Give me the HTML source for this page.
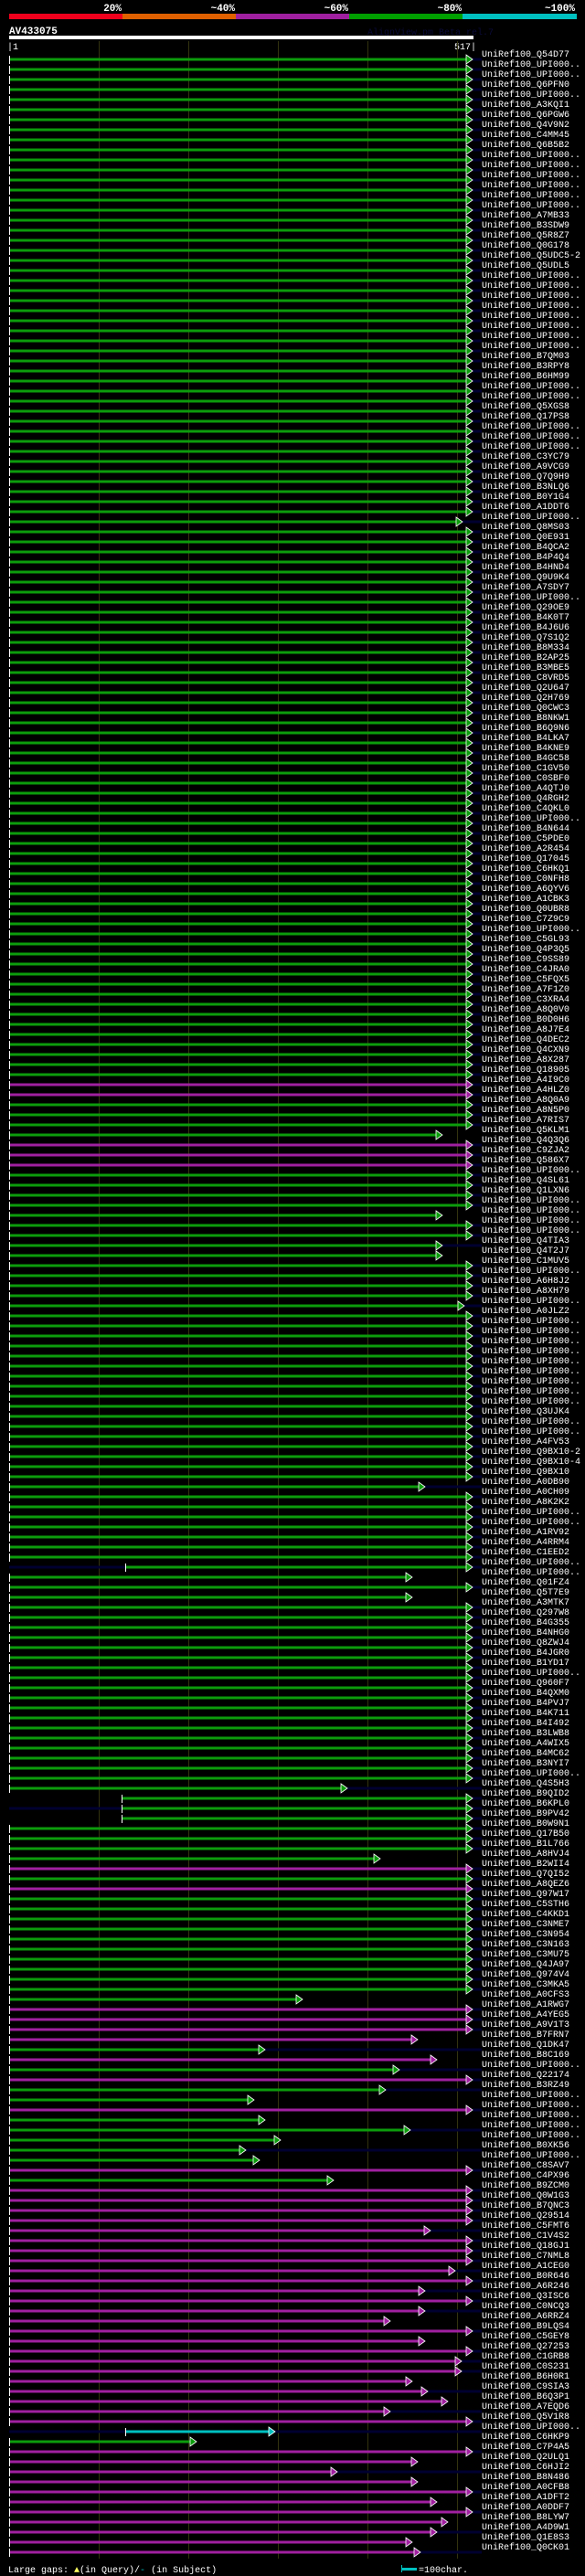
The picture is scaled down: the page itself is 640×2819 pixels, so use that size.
<!DOCTYPE html>
<html><head><meta charset="utf-8">
<style>
html,body{margin:0;padding:0;background:#000;}
body{width:640px;height:2819px;position:relative;overflow:hidden;font-family:"Liberation Mono","DejaVu Sans Mono",monospace;}
svg{position:absolute;left:0;top:0;}
#labels{position:absolute;left:527px;top:55px;color:#fff;font-size:10px;line-height:11px;white-space:pre;font-family:"Liberation Mono",monospace;}
.t{position:absolute;white-space:pre;}
</style></head><body>
<svg id="g" width="640" height="2819" xmlns="http://www.w3.org/2000/svg">
<rect x="10" y="15" width="124" height="6" fill="#f0001c"/>
<rect x="134" y="15" width="124" height="6" fill="#e06000"/>
<rect x="258" y="15" width="124" height="6" fill="#a020a0"/>
<rect x="382" y="15" width="124" height="6" fill="#00a000"/>
<rect x="506" y="15" width="125" height="6" fill="#00c0c0"/>
<g font-family="Liberation Mono, monospace" font-weight="bold" font-size="11" fill="#fff" text-anchor="end">
<text x="133" y="12">20%</text><text x="257" y="12">~40%</text><text x="381" y="12">~60%</text><text x="505" y="12">~80%</text><text x="629" y="12">~100%</text>
</g>
<text x="10" y="37" font-family="Liberation Mono, monospace" font-weight="bold" font-size="11" fill="#fff">AV433075</text>
<text x="402" y="38" font-family="Liberation Mono, monospace" font-size="10" fill="#0a0a38">AlignView.pm Beta rel.7</text>
<rect x="10" y="39" width="508" height="4" fill="#fff"/>
<text x="8" y="54" font-family="Liberation Mono, monospace" font-size="10" fill="#fff">|1</text>
<text x="521" y="54" font-family="Liberation Mono, monospace" font-size="10" fill="#fff" text-anchor="end">517|</text>
<g stroke="#33330f" stroke-width="1">
<line x1="108.5" y1="45" x2="108.5" y2="2800"/><line x1="206.5" y1="45" x2="206.5" y2="2800"/><line x1="304.5" y1="45" x2="304.5" y2="2800"/><line x1="402.5" y1="45" x2="402.5" y2="2800"/><line x1="500.5" y1="45" x2="500.5" y2="2800"/>
</g>
<g id="rows"></g>
<text x="9" y="2815" font-family="Liberation Mono, monospace" font-size="10" fill="#fff">Large gaps: <tspan fill="#ffff60">▲</tspan>(in Query)/<tspan fill="#00c0c0">-</tspan> (in Subject)</text>
<rect x="439" y="2810" width="17" height="3" fill="#00c0c0"/>
<rect x="439" y="2807" width="1" height="8" fill="#00c0c0"/>
<text x="458" y="2815" font-family="Liberation Mono, monospace" font-size="10" fill="#fff">=100char.</text>
</svg>
<div id="labels">UniRef100_Q54D77
UniRef100_UPI000..
UniRef100_UPI000..
UniRef100_Q6PFN0
UniRef100_UPI000..
UniRef100_A3KQI1
UniRef100_Q6PGW6
UniRef100_Q4V9N2
UniRef100_C4MM45
UniRef100_Q6B5B2
UniRef100_UPI000..
UniRef100_UPI000..
UniRef100_UPI000..
UniRef100_UPI000..
UniRef100_UPI000..
UniRef100_UPI000..
UniRef100_A7MB33
UniRef100_B3SDW9
UniRef100_Q5R8Z7
UniRef100_Q0G178
UniRef100_Q5UDC5-2
UniRef100_Q5UDL5
UniRef100_UPI000..
UniRef100_UPI000..
UniRef100_UPI000..
UniRef100_UPI000..
UniRef100_UPI000..
UniRef100_UPI000..
UniRef100_UPI000..
UniRef100_UPI000..
UniRef100_B7QM03
UniRef100_B3RPY8
UniRef100_B6HM99
UniRef100_UPI000..
UniRef100_UPI000..
UniRef100_Q5XGS8
UniRef100_Q17PS8
UniRef100_UPI000..
UniRef100_UPI000..
UniRef100_UPI000..
UniRef100_C3YC79
UniRef100_A9VCG9
UniRef100_Q7Q9H9
UniRef100_B3NLQ6
UniRef100_B0Y1G4
UniRef100_A1DDT6
UniRef100_UPI000..
UniRef100_Q8MS03
UniRef100_Q0E931
UniRef100_B4QCA2
UniRef100_B4P4Q4
UniRef100_B4HND4
UniRef100_Q9U9K4
UniRef100_A7SDY7
UniRef100_UPI000..
UniRef100_Q29OE9
UniRef100_B4K0T7
UniRef100_B4J6U6
UniRef100_Q7S1Q2
UniRef100_B8M334
UniRef100_B2AP25
UniRef100_B3MBE5
UniRef100_C8VRD5
UniRef100_Q2U647
UniRef100_Q2H769
UniRef100_Q0CWC3
UniRef100_B8NKW1
UniRef100_B6Q9N6
UniRef100_B4LKA7
UniRef100_B4KNE9
UniRef100_B4GC58
UniRef100_C1GV50
UniRef100_C0SBF0
UniRef100_A4QTJ0
UniRef100_Q4RGH2
UniRef100_C4QKL0
UniRef100_UPI000..
UniRef100_B4N644
UniRef100_C5PDE0
UniRef100_A2R454
UniRef100_Q17045
UniRef100_C6HKQ1
UniRef100_C0NFH8
UniRef100_A6QYV6
UniRef100_A1CBK3
UniRef100_Q0UBR8
UniRef100_C7Z9C9
UniRef100_UPI000..
UniRef100_C5GL93
UniRef100_Q4P3Q5
UniRef100_C9SS89
UniRef100_C4JRA0
UniRef100_C5FQX5
UniRef100_A7F1Z0
UniRef100_C3XRA4
UniRef100_A8Q0V0
UniRef100_B0D0H6
UniRef100_A8J7E4
UniRef100_Q4DEC2
UniRef100_Q4CXN9
UniRef100_A8X287
UniRef100_Q18905
UniRef100_A4I9C0
UniRef100_A4HLZ0
UniRef100_A8Q0A9
UniRef100_A8N5P0
UniRef100_A7RIS7
UniRef100_Q5KLM1
UniRef100_Q4Q3Q6
UniRef100_C9ZJA2
UniRef100_Q586X7
UniRef100_UPI000..
UniRef100_Q4SL61
UniRef100_Q1LXN6
UniRef100_UPI000..
UniRef100_UPI000..
UniRef100_UPI000..
UniRef100_UPI000..
UniRef100_Q4TIA3
UniRef100_Q4T2J7
UniRef100_C1MUV5
UniRef100_UPI000..
UniRef100_A6H8J2
UniRef100_A8XH79
UniRef100_UPI000..
UniRef100_A0JLZ2
UniRef100_UPI000..
UniRef100_UPI000..
UniRef100_UPI000..
UniRef100_UPI000..
UniRef100_UPI000..
UniRef100_UPI000..
UniRef100_UPI000..
UniRef100_UPI000..
UniRef100_UPI000..
UniRef100_Q3UJK4
UniRef100_UPI000..
UniRef100_UPI000..
UniRef100_A4FV53
UniRef100_Q9BX10-2
UniRef100_Q9BX10-4
UniRef100_Q9BX10
UniRef100_A0DB90
UniRef100_A0CH09
UniRef100_A8K2K2
UniRef100_UPI000..
UniRef100_UPI000..
UniRef100_A1RV92
UniRef100_A4RRM4
UniRef100_C1EED2
UniRef100_UPI000..
UniRef100_UPI000..
UniRef100_Q01FZ4
UniRef100_Q5T7E9
UniRef100_A3MTK7
UniRef100_Q297W8
UniRef100_B4G355
UniRef100_B4NHG0
UniRef100_Q8ZWJ4
UniRef100_B4JGR0
UniRef100_B1YD17
UniRef100_UPI000..
UniRef100_Q960F7
UniRef100_B4QXM0
UniRef100_B4PVJ7
UniRef100_B4K711
UniRef100_B4I492
UniRef100_B3LWB8
UniRef100_A4WIX5
UniRef100_B4MC62
UniRef100_B3NYI7
UniRef100_UPI000..
UniRef100_Q4S5H3
UniRef100_B9QID2
UniRef100_B6KPL0
UniRef100_B9PV42
UniRef100_B0W9N1
UniRef100_Q17B50
UniRef100_B1L766
UniRef100_A8HVJ4
UniRef100_B2WII4
UniRef100_Q7QI52
UniRef100_A8QEZ6
UniRef100_Q97W17
UniRef100_C5STH6
UniRef100_C4KKD1
UniRef100_C3NME7
UniRef100_C3N954
UniRef100_C3N163
UniRef100_C3MU75
UniRef100_Q4JA97
UniRef100_Q974V4
UniRef100_C3MKA5
UniRef100_A0CFS3
UniRef100_A1RWG7
UniRef100_A4YEG5
UniRef100_A9V1T3
UniRef100_B7FRN7
UniRef100_Q1DK47
UniRef100_B8C169
UniRef100_UPI000..
UniRef100_Q22174
UniRef100_B3RZ49
UniRef100_UPI000..
UniRef100_UPI000..
UniRef100_UPI000..
UniRef100_UPI000..
UniRef100_UPI000..
UniRef100_B0XK56
UniRef100_UPI000..
UniRef100_C8SAV7
UniRef100_C4PX96
UniRef100_B9ZCM0
UniRef100_Q0W1G3
UniRef100_B7QNC3
UniRef100_Q29514
UniRef100_C5FMT6
UniRef100_C1V4S2
UniRef100_Q18GJ1
UniRef100_C7NML8
UniRef100_A1CEG0
UniRef100_B0R646
UniRef100_A6R246
UniRef100_Q3ISC6
UniRef100_C0NCQ3
UniRef100_A6RRZ4
UniRef100_B9LQS4
UniRef100_C5GEY8
UniRef100_Q27253
UniRef100_C1GRB8
UniRef100_C0S231
UniRef100_B6H0R1
UniRef100_C9SIA3
UniRef100_B6Q3P1
UniRef100_A7EQD6
UniRef100_Q5V1R8
UniRef100_UPI000..
UniRef100_C6HKP9
UniRef100_C7P4A5
UniRef100_Q2ULQ1
UniRef100_C6HJI2
UniRef100_B8N486
UniRef100_A0CFB8
UniRef100_A1DFT2
UniRef100_A0DDF7
UniRef100_B8LYW7
UniRef100_A4D9W1
UniRef100_Q1E8S3
UniRef100_Q0CK01</div>
<script>
(function(){
var G='#0c9c0c',M='#a020a0',C='#00c0c0';
var N=249, rows=[];
for(var i=0;i<N;i++) rows.push({c:G,e:517,s:10,t:1,pre:0});
function set(i,o){for(var k in o) rows[i][k]=o[k];}
set(46,{e:506,t:1});
[102,103,108,109,110].forEach(function(i){set(i,{c:M});});
set(107,{e:484,t:0});set(115,{e:484,t:0});set(118,{e:484,t:1});set(119,{e:484,t:0});set(124,{e:508});
set(142,{e:465,t:1});set(150,{s:137,pre:1});set(151,{e:451,t:0});set(153,{e:451,t:0});
set(172,{e:380,t:1});set(173,{s:133});set(174,{s:133,pre:1});set(175,{s:133});
set(179,{e:416,t:0});set(180,{c:M});set(182,{c:M});
set(193,{e:331,t:0});
[194,195,196,201,204].forEach(function(i){set(i,{c:M});});
set(197,{c:M,e:457,t:0});set(198,{e:290,t:1});set(199,{c:M,e:478,t:0});set(200,{e:437,t:1});
set(202,{e:422,t:1});set(203,{e:278,t:0});set(205,{e:290,t:0});set(206,{e:449,t:1});set(207,{e:307,t:0});
set(208,{e:269,t:1});set(209,{e:284,t:0});set(211,{e:365,t:0});
for(var i=210;i<N;i++){ if(i!==211) rows[i].c=M; }
set(216,{e:471,t:1});set(220,{e:498,t:1});set(222,{e:465,t:1});set(224,{e:465,t:1});set(225,{e:427,t:0});
set(227,{e:465,t:0});set(229,{e:505});set(230,{e:505});set(231,{e:451,t:0});set(232,{e:468,t:1});
set(233,{e:490,t:0});set(234,{e:427,t:1});
set(236,{c:C,s:137,e:301,pre:1,t:1});set(237,{c:G,e:215,t:0});
set(239,{e:457,t:0});set(240,{e:369,t:1});set(241,{e:457,t:0});
set(243,{e:478,t:0});set(245,{e:490,t:0});set(246,{e:478,t:1});set(247,{e:451,t:0});set(248,{e:460,t:1});
var ns='http://www.w3.org/2000/svg', g=document.getElementById('rows'), h='';
for(var i=0;i<N;i++){
 var r=rows[i], y=65+11*i;
 if(r.pre) h+='<rect x="10" y="'+(y-1.5)+'" width="'+(r.s-10)+'" height="3" fill="#000030"/>';
 if(r.t) h+='<rect x="'+r.e+'" y="'+(y-1.5)+'" width="'+(527-r.e)+'" height="3" fill="#000030"/>';
 h+='<rect x="'+r.s+'" y="'+(y-1.5)+'" width="'+(r.e-7-r.s)+'" height="3" fill="'+r.c+'"/>';
 h+='<rect x="'+r.s+'" y="'+(y-4)+'" width="1" height="9" fill="#fff"/>';
 h+='<polygon points="'+(r.e-7)+','+(y-5)+' '+r.e+','+y+' '+(r.e-7)+','+(y+5)+'" fill="'+r.c+'" stroke="#fff" stroke-width="0.8"/>';
}
g.innerHTML=h;
})();
</script>
</body></html>
